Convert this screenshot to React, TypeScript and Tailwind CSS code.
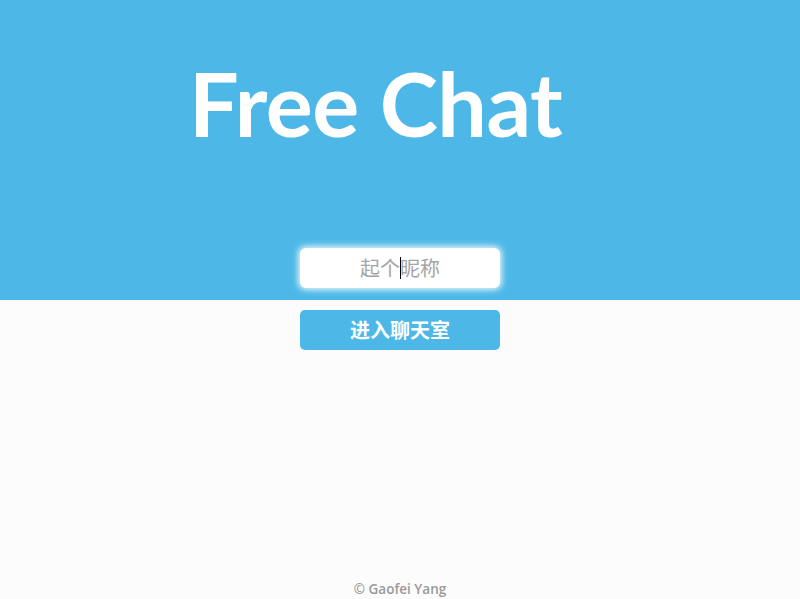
import React from "react";

export default function App() {
  return (
    <div
      className="w-[800px] h-[599px] bg-[#fcfcfc] flex flex-col relative overflow-hidden"
      style={{ fontFamily: '"Open Sans", "Noto Sans CJK SC", sans-serif' }}
    >
      <div className="h-[300px] bg-[#4db8e8] flex flex-col">
        <h1
          className="pl-[189px] pt-[43px] text-[88px] leading-[120px] font-bold text-white tracking-[-0.5px]"
          style={{ fontFamily: 'Lato, sans-serif' }}
        >
          Free Chat
        </h1>
        <div className="mt-[85px] flex justify-center">
          <div className="relative w-[200px] h-[40px] bg-white rounded-[6px] shadow-[0_0_6px_2px_rgba(255,255,255,0.85)] flex items-center justify-center">
            <span className="text-[20px] text-[#a4a4a4]" style={{ fontFamily: '"Noto Sans CJK SC", sans-serif' }}>
              起个昵称
            </span>
            <span className="absolute left-[100px] top-[9px] w-px h-[22px] bg-black" />
          </div>
        </div>
      </div>
      <div className="mt-[10px] flex justify-center">
        <button
          className="w-[200px] h-[40px] bg-[#4db8e8] rounded-[5px] text-white text-[20px] font-bold"
          style={{ fontFamily: '"Noto Sans CJK SC", sans-serif' }}
        >
          进入聊天室
        </button>
      </div>
      <div className="mt-auto pb-[1px] text-center text-[13.5px] font-semibold text-[#9a9a9a] leading-[18px]">
        © Gaofei Yang
      </div>
    </div>
  );
}
